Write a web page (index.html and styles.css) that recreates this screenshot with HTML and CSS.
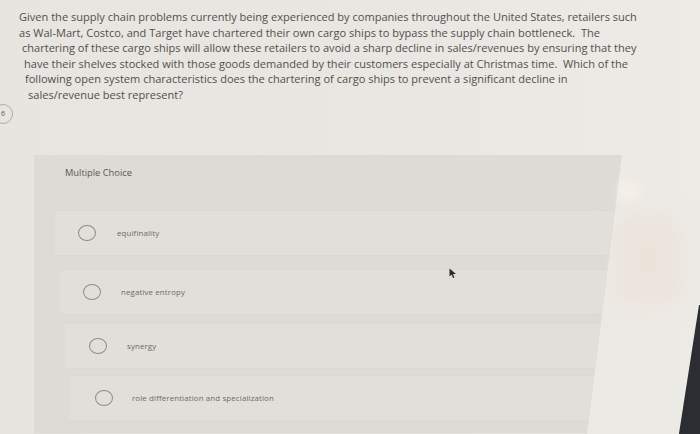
FILE: index.html
```html
<!DOCTYPE html>
<html>
<head>
<meta charset="utf-8">
<link rel="stylesheet" href="styles.css">
</head>
<body>
<div class="screen">
  <div class="question">
    <div class="ln l1">Given the supply chain problems currently being experienced by companies throughout the United States, retailers such</div>
    <div class="ln l2">as Wal-Mart, Costco, and Target have chartered their own cargo ships to bypass the supply chain bottleneck.&nbsp; The</div>
    <div class="ln l3">chartering of these cargo ships will allow these retailers to avoid a sharp decline in sales/revenues by ensuring that they</div>
    <div class="ln l4">have their shelves stocked with those goods demanded by their customers especially at Christmas time.&nbsp; Which of the</div>
    <div class="ln l5">following open system characteristics does the chartering of cargo ships to prevent a significant decline in</div>
    <div class="ln l6">sales/revenue best represent?</div>
  </div>
  <div class="badge">6</div>

  <div class="panel">
    <div class="panel-head">Multiple Choice</div>
    <div class="opts">
      <div class="opt o1"><span class="radio"></span><span class="lbl">equifinality</span></div>
      <div class="opt o2"><span class="radio"></span><span class="lbl">negative entropy</span></div>
      <div class="opt o3"><span class="radio"></span><span class="lbl">synergy</span></div>
      <div class="opt o4"><span class="radio"></span><span class="lbl">role differentiation and specialization</span></div>
    </div>
  </div>

  <div class="glare-spot"></div>
  <div class="glare-pink"></div>
  <div class="bezel"></div>
  <svg class="cursor" width="8" height="11" viewBox="0 0 8 11"><path d="M0.5 0.5 L0.5 8.5 L2.6 6.6 L4 10 L5.4 9.4 L4 6.1 L7 6.1 Z" fill="#2a2a2a"/></svg>
</div>
</body>
</html>
```

FILE: styles.css
```css
* { box-sizing: border-box; }
html, body { margin: 0; padding: 0; }
body {
  width: 700px;
  height: 434px;
  overflow: hidden;
  background: #e9e7e2;
  font-family: "Open Sans", "Lato", sans-serif;
}
.screen {
  position: relative;
  width: 700px;
  height: 434px;
  overflow: hidden;
  background: linear-gradient(90deg, #e7e5e0 0%, #e9e7e2 60%, #edebe6 100%);
}
.question {
  padding-top: 9px;
  color: #52504d;
  font-size: 11.05px;
  line-height: 15.6px;
  white-space: nowrap;
}
.l1 { padding-left: 19px; }
.l2 { padding-left: 19px; }
.l3 { padding-left: 22px; }
.l4 { padding-left: 24px; }
.l5 { padding-left: 25px; }
.l6 { padding-left: 28px; }

.badge {
  position: absolute;
  left: -7px;
  top: 104px;
  width: 20px;
  height: 20px;
  border: 1px solid #aeaca8;
  border-radius: 50%;
  font-size: 7px;
  line-height: 18px;
  text-align: right;
  padding-right: 7px;
  color: #555;
}

.panel {
  margin-top: 52px;
  margin-left: 34px;
  width: 590px;
  height: 279px;
  background: #dddbd6;
  clip-path: polygon(0 0, 588px 0, 553px 100%, 0 100%);
}
.panel-head {
  height: 55px;
  padding: 12px 0 0 31px;
  font-size: 9.3px;
  line-height: 12px;
  color: #5a5855;
}
.opts {
  display: flex;
  flex-direction: column;
  padding-left: 21px;
}
.opt {
  display: flex;
  align-items: center;
  height: 46px;
  width: 600px;
  background: #e0dfda;
  border-top: 1px solid #dbd9d4;
  border-bottom: 1px solid #dad8d3;
  font-size: 7.85px;
  color: #6c6a67;
}
.o1 { padding-left: 23px; }
.o2 { margin-top: 13px; margin-left: 5px; padding-left: 23px; }
.o3 { margin-top: 8px; margin-left: 10px; padding-left: 24px; }
.o4 { margin-top: 6px; margin-left: 15px; padding-left: 25px; }
.radio {
  width: 18px;
  height: 16px;
  border: 1.3px solid #8e8c88;
  border-radius: 50%;
  flex: none;
}
.lbl { margin-left: 21px; letter-spacing: 0.15px; }
.o2 .lbl { margin-left: 20px; }
.o3 .lbl { margin-left: 20px; }
.o4 .lbl { margin-left: 19px; }

.glare-spot {
  position: absolute;
  left: 619px;
  top: 181px;
  width: 20px;
  height: 20px;
  background: #f7f2ea;
  filter: blur(4px);
  opacity: 0.8;
}
.glare-pink {
  position: absolute;
  left: 616px;
  top: 214px;
  width: 64px;
  height: 92px;
  background: #ecdfd6;
  filter: blur(12px);
  opacity: 0.6;
}
.bezel {
  position: absolute;
  left: 676px;
  top: 305px;
  width: 30px;
  height: 135px;
  background: #2b2d33;
  clip-path: polygon(23px 0, 30px 0, 30px 100%, 2px 100%);
}
.cursor {
  position: absolute;
  left: 449px;
  top: 268px;
}
```
